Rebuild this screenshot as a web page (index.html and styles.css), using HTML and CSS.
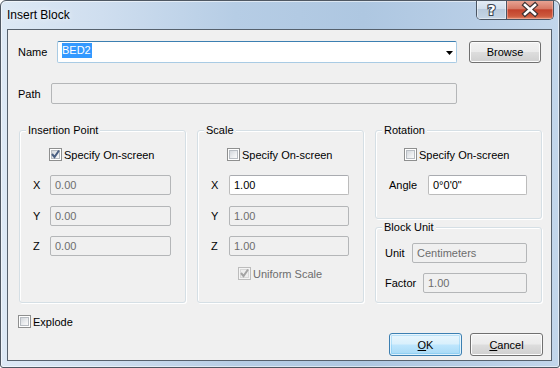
FILE: index.html
```html
<!DOCTYPE html>
<html>
<head>
<meta charset="utf-8">
<title>Insert Block</title>
<link rel="stylesheet" href="styles.css">
</head>
<body>
<div class="window">
  <div class="titlebar">
    <span class="title">Insert Block</span>
    <div class="caption-btns">
      <div class="cbtn help">
        <svg width="29" height="19" viewBox="0 0 29 19"><text x="14.5" y="15" text-anchor="middle" class="qmark" paint-order="stroke">?</text></svg>
      </div>
      <div class="cbtn close">
        <svg width="46" height="19" viewBox="0 0 46 19">
          <path d="M18 5 L28 14 M28 5 L18 14" class="x-outer"/>
          <path d="M18 5 L28 14 M28 5 L18 14" class="x-inner"/>
        </svg>
      </div>
    </div>
  </div>
  <div class="client">
    <div class="row name-row">
      <span class="lbl w-name">Name</span>
      <div class="combo">
        <span class="sel">BED2</span>
        <svg class="arrow" width="7" height="4" viewBox="0 0 7 4"><polygon points="0,0 7,0 3.5,4" fill="#000"/></svg>
      </div>
      <div class="btn browse">Browse</div>
    </div>
    <div class="row path-row">
      <span class="lbl w-path">Path</span>
      <div class="field disabled path"></div>
    </div>

    <div class="groups">
      <div class="group g-tall g-ins">
        <span class="legend">Insertion Point</span>
        <div class="check-row pl-29">
          <span class="cb"><svg width="11" height="11" viewBox="0 0 11 11"><polyline points="2,5 4.5,8 9,1.5" class="tick"/></svg></span>Specify On-screen
        </div>
        <div class="fields">
          <div class="frow"><span class="flbl w17">X</span><div class="field disabled w121">0.00</div></div>
          <div class="frow"><span class="flbl w17">Y</span><div class="field disabled w121">0.00</div></div>
          <div class="frow"><span class="flbl w17">Z</span><div class="field disabled w121">0.00</div></div>
        </div>
      </div>

      <div class="group g-tall g-scale">
        <span class="legend">Scale</span>
        <div class="check-row pl-29">
          <span class="cb"></span>Specify On-screen
        </div>
        <div class="fields">
          <div class="frow"><span class="flbl w18">X</span><div class="field w120">1.00</div></div>
          <div class="frow"><span class="flbl w18">Y</span><div class="field disabled w120">1.00</div></div>
          <div class="frow"><span class="flbl w18">Z</span><div class="field disabled w120">1.00</div></div>
        </div>
        <div class="check-row uniform disabled-text">
          <span class="cb cb-disabled"><svg width="11" height="11" viewBox="0 0 11 11"><polyline points="2,5 4.5,8 9,1.5" class="tick tick-disabled"/></svg></span>Uniform Scale
        </div>
      </div>

      <div class="col3">
        <div class="group g-rot">
          <span class="legend">Rotation</span>
          <div class="check-row pl-28">
            <span class="cb"></span>Specify On-screen
          </div>
          <div class="frow angle-row"><span class="flbl w39">Angle</span><div class="field w99">0°0'0"</div></div>
        </div>
        <div class="group g-unit">
          <span class="legend">Block Unit</span>
          <div class="frow"><span class="flbl w27">Unit</span><div class="field disabled w115">Centimeters</div></div>
          <div class="frow factor-row"><span class="flbl w38">Factor</span><div class="field disabled w104">1.00</div></div>
        </div>
      </div>
    </div>

    <div class="check-row explode">
      <span class="cb"></span>Explode
    </div>
    <div class="btn-row">
      <div class="btn default"><span><u>O</u>K</span></div>
      <div class="btn"><span><u>C</u>ancel</span></div>
    </div>
  </div>
</div>
</body>
</html>
```

FILE: styles.css
```css
html, body {
  margin: 0;
  padding: 0;
  background: #ffffff;
}

body {
  font-family: "Liberation Sans", Arial, sans-serif;
  font-size: 11px;
  color: #000;
}

.window {
  box-sizing: border-box;
  width: 560px;
  height: 368px;
  border: 1px solid #4f5863;
  border-radius: 6px 6px 3px 3px;
  background: linear-gradient(to right, #dde9f5 0%, #cfdeef 18%, #b6cde5 42%, #aec7e1 65%, #b8cee6 85%, #c2d6eb 100%);
  box-shadow: inset 0 0 0 1px rgba(255, 255, 255, 0.55);
  display: flex;
  flex-direction: column;
  overflow: hidden;
}

.titlebar {
  height: 28px;
  display: flex;
  justify-content: space-between;
  align-items: flex-start;
  flex: none;
}

.title {
  font-size: 12px;
  line-height: 14px;
  padding: 7px 0 0 6px;
  color: #000;
  text-shadow: 0 0 6px rgba(255, 255, 255, 0.9);
}

.caption-btns {
  display: flex;
  margin-top: -1px;
  margin-right: 5px;
  height: 20px;
  box-sizing: border-box;
  border: 1px solid #4a5563;
  border-top: none;
  border-radius: 0 0 5px 5px;
  overflow: hidden;
}

.cbtn {
  height: 19px;
  display: flex;
}

.help {
  width: 29px;
  background: linear-gradient(#e6eef6 0%, #d2dfec 45%, #b9cadc 50%, #c6d6e6 100%);
  border-right: 1px solid #4a5563;
  box-shadow: inset 0 0 0 1px rgba(255, 255, 255, 0.45);
}

.close {
  width: 46px;
  background: linear-gradient(#e9a898 0%, #d77a66 45%, #c2422c 52%, #cd5a3e 85%, #e08a6a 100%);
  box-shadow: inset 0 0 0 1px rgba(255, 200, 190, 0.45);
}

.qmark {
  font-family: "DejaVu Sans", sans-serif;
  font-weight: bold;
  font-size: 14px;
  fill: #ffffff;
  stroke: #3b4654;
  stroke-width: 2.2px;
}

.x-outer {
  stroke: #3e3232;
  stroke-width: 5px;
  stroke-linecap: square;
  fill: none;
}

.x-inner {
  stroke: #ffffff;
  stroke-width: 2.6px;
  stroke-linecap: square;
  fill: none;
}

.client {
  flex: 1;
  margin: 0 7px 6px 6px;
  border: 1px solid #56616d;
  background: #f0f0f0;
  padding: 11px 8px 0 10px;
}

.row {
  display: flex;
  align-items: center;
}

.name-row {
  height: 22px;
}

.path-row {
  height: 21px;
  margin-top: 20px;
}

.lbl {
  flex: none;
}

.w-name { width: 39px; }
.w-path { width: 33px; }

.combo {
  box-sizing: border-box;
  width: 400px;
  height: 22px;
  background: #fff;
  border: 1px solid #a9cbe4;
  border-top-color: #3c7fb1;
  border-radius: 2px;
  display: flex;
  justify-content: space-between;
  align-items: flex-start;
  padding: 0 3px 0 4px;
}

.sel {
  background: #3399ff;
  color: #fff;
  line-height: 15px;
  height: 15px;
  margin-top: 1px;
  padding: 0 1px 0 0;
}

.arrow {
  align-self: center;
  margin-top: 1px;
}

.btn {
  box-sizing: border-box;
  width: 73px;
  height: 23px;
  border: 1px solid #707070;
  border-radius: 3px;
  background: linear-gradient(#f2f2f2 0%, #ebebeb 48%, #dddddd 52%, #cfcfcf 100%);
  box-shadow: inset 0 0 0 1px #fcfcfc;
  display: flex;
  align-items: center;
  justify-content: center;
}

.browse {
  width: 72px;
  height: 22px;
  margin-left: 12px;
}

.btn.default {
  border-color: #3c7fb1;
  background: linear-gradient(#eaf6fd 0%, #d9f0fc 48%, #bee6fd 52%, #a7d9f5 100%);
  box-shadow: inset 0 0 0 1px rgba(255, 255, 255, 0.7), inset 0 0 0 2px rgba(96, 190, 240, 0.35);
}

.field {
  box-sizing: border-box;
  height: 20px;
  background: #fff;
  border: 1px solid #bcbcbc;
  border-top-color: #a9abb0;
  border-radius: 2px;
  padding-left: 4px;
  line-height: 18px;
  color: #000;
  white-space: nowrap;
  overflow: hidden;
}

.field.disabled {
  background: #f0f0f0;
  border-color: #b4b6b8;
  color: #6d6d6d;
}

.path {
  width: 406px;
  height: 21px;
}

.groups {
  display: flex;
  gap: 11px;
  margin: 26px 0 0 1px;
}

.group {
  box-sizing: border-box;
  position: relative;
  width: 167px;
  border: 1px solid #d5dfe5;
  border-radius: 3px;
  box-shadow: inset 1px 1px 0 #fff, 1px 1px 0 #fff;
}

.g-tall {
  height: 173px;
  padding-top: 17px;
}

.col3 {
  display: flex;
  flex-direction: column;
  gap: 8px;
}

.g-rot {
  height: 89px;
  padding-top: 17px;
}

.g-unit {
  height: 76px;
  padding: 15px 0 0 9px;
}

.legend {
  position: absolute;
  top: -7px;
  left: 6px;
  padding: 0 2px;
  background: #f0f0f0;
  line-height: 13px;
  white-space: nowrap;
}

.check-row {
  display: flex;
  align-items: center;
  height: 13px;
  white-space: nowrap;
}

.pl-29 { padding-left: 29px; }
.pl-28 { padding-left: 28px; }

.cb {
  box-sizing: border-box;
  position: relative;
  width: 13px;
  height: 13px;
  border: 1px solid #8e8f8f;
  background: #fff;
  margin-right: 2px;
  flex: none;
}

.cb::before {
  content: "";
  position: absolute;
  left: 1px;
  top: 1px;
  width: 9px;
  height: 9px;
  box-sizing: border-box;
  border: 1px solid #b7bcc2;
  background: linear-gradient(135deg, #d3d7dc 0%, #eceef0 60%, #fafafa 100%);
}

.cb svg {
  position: absolute;
  left: 0;
  top: 0;
}

.tick {
  fill: none;
  stroke: #4a5f82;
  stroke-width: 2px;
}

.cb-disabled {
  border-color: #bcbcbc;
  background: #f4f4f4;
}

.cb-disabled::before {
  border-color: #d8d8d8;
  background: #eeeeee;
}

.tick-disabled {
  stroke: #a4a4a4;
}

.disabled-text {
  color: #6d6d6d;
}

.fields {
  display: flex;
  flex-direction: column;
  gap: 10.5px;
  margin-top: 14px;
  padding-left: 13px;
}

.frow {
  display: flex;
  align-items: center;
  height: 20px;
}

.flbl {
  flex: none;
}

.w17 { width: 17px; }
.w18 { width: 18px; }
.w27 { width: 27px; }
.w38 { width: 38px; }
.w39 { width: 39px; }

.w99 { width: 99px; }
.w104 { width: 104px; }
.w115 { width: 115px; }
.w120 { width: 120px; }
.w121 { width: 121px; }

.uniform {
  margin-top: 11px;
  padding-left: 40px;
}

.angle-row {
  margin-top: 14px;
  padding-left: 13px;
}

.factor-row {
  margin-top: 10px;
}

.explode {
  margin-top: 12px;
}

.btn-row {
  display: flex;
  justify-content: flex-end;
  gap: 8px;
  margin-top: 5px;
}

u {
  text-decoration: underline;
  text-underline-offset: 1px;
}
```
